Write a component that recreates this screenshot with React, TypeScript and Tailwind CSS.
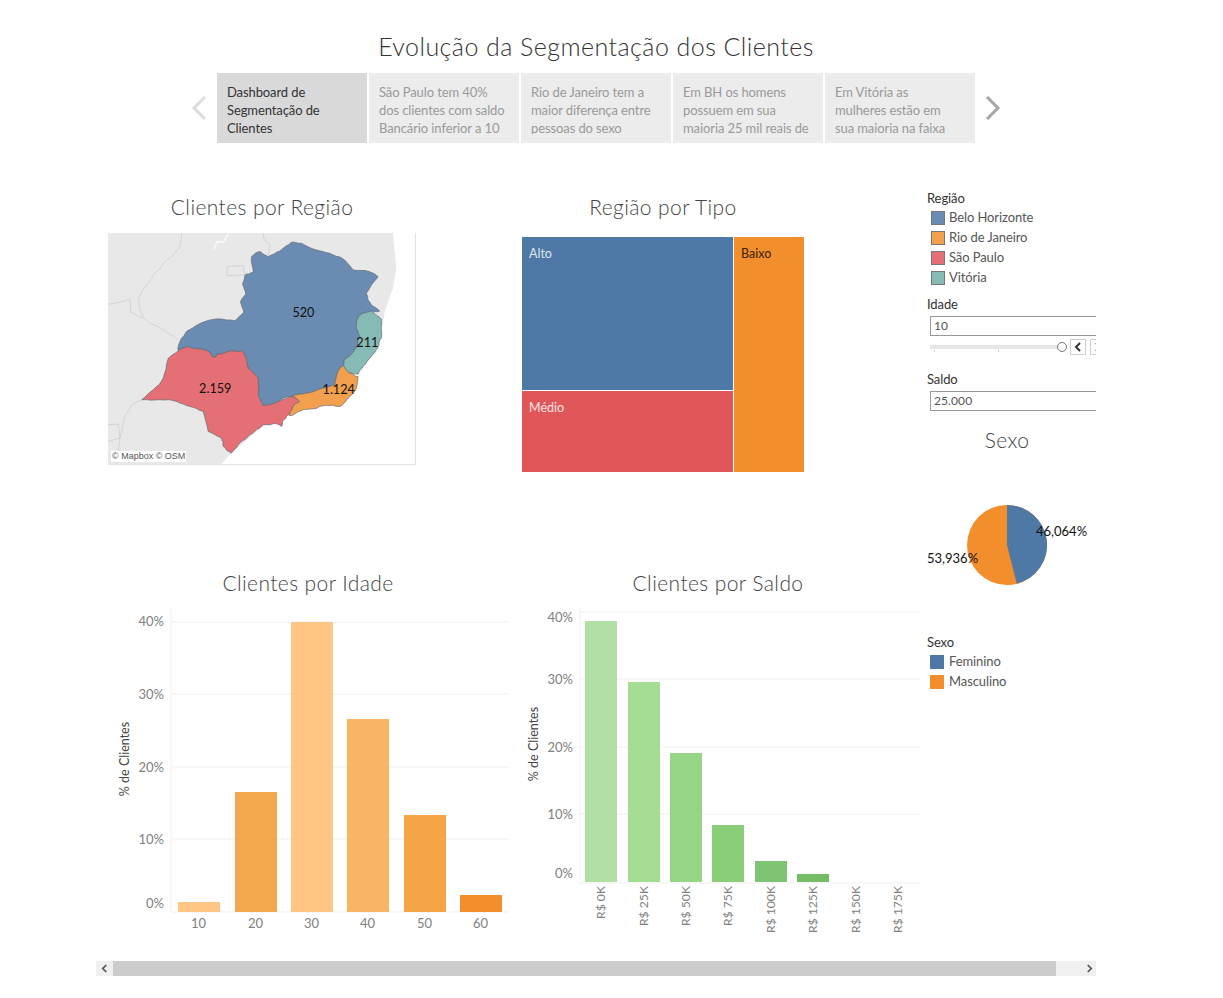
const font = "font-['Lato','Noto_Sans',sans-serif]";

const stories = [
  ["Dashboard de", "Segmentação de", "Clientes"],
  ["São Paulo tem 40%", "dos clientes com saldo", "Bancário inferior a 10"],
  ["Rio de Janeiro tem a", "maior diferença entre", "pessoas do sexo"],
  ["Em BH os homens", "possuem em sua", "maioria 25 mil reais de"],
  ["Em Vitória as", "mulheres estão em", "sua maioria na faixa"],
];

const regionLegend = [
  { label: "Belo Horizonte", color: "bg-[#6a8cb3]" },
  { label: "Rio de Janeiro", color: "bg-[#f2a04e]" },
  { label: "São Paulo", color: "bg-[#e46f75]" },
  { label: "Vitória", color: "bg-[#86bab4]" },
];

const ageBars = [
  { label: "10", x: 178, top: 902, color: "#fec584" },
  { label: "20", x: 235, top: 792, color: "#f4a84d" },
  { label: "30", x: 291, top: 622, color: "#fec584" },
  { label: "40", x: 347, top: 719, color: "#f8b566" },
  { label: "50", x: 404, top: 815, color: "#f5a546" },
  { label: "60", x: 460, top: 895, color: "#f28e2b" },
];

const saldoBars = [
  { label: "R$ 0K", x: 585, top: 621, color: "#b2dfa6" },
  { label: "R$ 25K", x: 628, top: 682, color: "#a4dc92" },
  { label: "R$ 50K", x: 670, top: 753, color: "#95d585" },
  { label: "R$ 75K", x: 712, top: 825, color: "#8acf78" },
  { label: "R$ 100K", x: 755, top: 861, color: "#7fc472" },
  { label: "R$ 125K", x: 797, top: 874, color: "#74bd66" },
  { label: "R$ 150K", x: 840, top: 882, color: "#74bd66" },
  { label: "R$ 175K", x: 882, top: 882, color: "#74bd66" },
];

// map borders are hand traced; this adds some wobble, same on both sides of a shared edge
const roughen = (points: string, passes = 2) => {
  let pts = points.split(" ").map((p) => p.split(",").map(Number));
  for (let pass = 0; pass < passes; pass++) {
    const next: number[][] = [];
    pts.forEach((p, i) => {
      const q = pts[(i + 1) % pts.length];
      const mx = (p[0] + q[0]) / 2;
      const my = (p[1] + q[1]) / 2;
      const a = Math.sin(mx * 12.9898 + my * 78.233) * 43758.5453;
      const b = Math.sin(mx * 39.346 + my * 11.135) * 24634.6345;
      const size = pass === 0 ? 6 : 3;
      next.push(p, [mx + (a - Math.floor(a) - 0.5) * size, my + (b - Math.floor(b) - 0.5) * size]);
    });
    pts = next;
  }
  return pts.map((p) => `${p[0].toFixed(1)},${p[1].toFixed(1)}`).join(" ");
};

const Title = ({ children, className }: { children: string; className: string }) => (
  <h2 className={`h-[28px] text-center text-[21px] leading-[28px] font-light tracking-[0.4px] text-[#444] ${className}`}>
    {children}
  </h2>
);

const FieldLabel = ({ children, className = "" }: { children: string; className?: string }) => (
  <div className={`h-[14px] text-[13px] leading-[14px] tracking-[-0.1px] text-[#333] ${className}`}>{children}</div>
);

const RegionMap = () => (
  <div className="relative h-[232px] w-[308px] border-r border-b border-[#e3e3e3]">
    <svg viewBox="24 24 922 694" className="h-[231px] w-[307px]">
      <polygon points="24,24 880,24 890,130 880,190 855,260 850,300 395,685 365,718 24,718" fill="#e8e8e8" />
      <g fill="none" stroke="#c8c8c8" strokeWidth="2">
        <polyline points="245,24 243,50 238,68 215,95 195,110 180,130 160,150 148,170 125,200 115,225 120,255 130,280 150,296 175,305 205,325 235,345" />
        <polyline points="24,238 60,232 90,222 92,260 125,280" />
        <polyline points="490,24 492,42 510,60 505,95" />
        <polyline points="382,124 430,122 434,150 382,152 382,124" />
        <polyline points="125,525 95,540 75,575 60,640 50,718" />
        <polyline points="24,600 55,598 60,640 24,650" />
      </g>
      <polyline points="342,72 352,50 372,50 385,28" fill="none" stroke="#f6f6f6" strokeWidth="6" />
      <g stroke="#5f6670" strokeWidth="2" strokeLinejoin="round">
        <polygon
          fill="#6a8cb3"
          points={roughen("235,378 240,350 262,318 300,296 350,282 405,288 432,262 422,232 438,208 428,178 436,150 460,142 455,95 482,80 505,95 540,78 575,52 605,55 640,72 690,85 725,98 760,135 808,140 835,155 815,180 800,205 815,240 840,258 815,260 790,265 772,285 770,310 780,335 772,365 755,388 732,405 732,422 715,440 705,480 670,490 620,505 575,515 545,525 510,540 490,543 475,510 475,460 445,430 428,378 390,378 350,388 340,398 330,382 290,372 262,365")}
        />
        <polygon
          fill="#e46f75"
          points={roughen("262,365 290,372 330,382 340,398 350,388 390,378 428,378 445,430 475,460 475,510 490,543 510,540 575,515 600,530 580,545 565,570 548,590 545,605 520,597 490,600 450,630 420,655 395,685 370,665 365,640 325,620 310,560 270,545 230,530 180,525 125,525 160,495 190,460 205,400 235,378")}
        />
        <polygon
          fill="#f2a04e"
          points={roughen("575,515 620,505 670,490 705,480 715,440 732,422 750,445 775,455 770,490 745,520 722,545 690,542 660,545 640,552 610,555 590,565 567,572 580,545 600,530")}
        />
        <polygon
          fill="#86bab4"
          points={roughen("790,265 815,258 845,282 845,340 835,368 815,395 790,425 775,448 750,445 732,422 732,405 755,388 772,365 780,335 770,310 772,285")}
        />
      </g>
      <g fill="#111" fontSize="38" textAnchor="middle">
        <text x="611" y="276">520</text>
        <text x="803" y="368">211</text>
        <text x="717" y="509">1.124</text>
        <text x="346" y="504">2.159</text>
      </g>
    </svg>
    <span className="absolute bottom-[2px] left-[3px] bg-white px-[1px] font-['Liberation_Sans',sans-serif] text-[9px] leading-[11px] text-[#555]">
      © Mapbox © OSM
    </span>
  </div>
);

const Treemap = () => (
  <div className="flex h-[235px] w-[282px] gap-[1px] text-[12.5px] leading-[14px]">
    <div className="flex w-[211px] flex-col gap-[1px]">
      <div className="h-[153px] bg-[#4e79a7] px-[7px] py-[10px] text-[#dfe7f0]">Alto</div>
      <div className="flex-1 bg-[#e15759] px-[7px] py-[10px] text-[#fbe3e3]">Médio</div>
    </div>
    <div className="flex-1 bg-[#f28e2b] px-[7px] py-[10px] text-[#3a2208]">Baixo</div>
  </div>
);

const AgeChart = () => (
  <svg viewBox="96 598 424 340" className="h-[340px] w-[424px]">
    <line x1="171" y1="608" x2="171" y2="912" stroke="#f0f0f0" />
    {[622, 694, 767, 839, 912].map((y) => (
      <line key={y} x1="171" y1={y} x2="509" y2={y} stroke="#efefef" />
    ))}
    {ageBars.map((b) => (
      <g key={b.label}>
        <rect x={b.x} y={b.top} width="42" height={912 - b.top} fill={b.color} />
        <text x={b.x + 20.5} y="928" textAnchor="middle" fontSize="13" fill="#808080">{b.label}</text>
      </g>
    ))}
    <g fontSize="13" fill="#808080" textAnchor="end">
      <text x="164" y="626">40%</text>
      <text x="164" y="699">30%</text>
      <text x="164" y="772">20%</text>
      <text x="164" y="844">10%</text>
      <text x="164" y="908">0%</text>
    </g>
    <text transform="translate(129 759) rotate(-90)" textAnchor="middle" fontSize="12.5" fill="#444">% de Clientes</text>
  </svg>
);

const SaldoChart = () => (
  <svg viewBox="520 598 400 340" className="h-[340px] w-[400px]">
    <line x1="580" y1="608" x2="580" y2="883" stroke="#f0f0f0" />
    {[612, 679, 747, 814, 883].map((y) => (
      <line key={y} x1="580" y1={y} x2="920" y2={y} stroke="#efefef" />
    ))}
    {saldoBars.map((b) => (
      <g key={b.label}>
        {b.top < 882 && <rect x={b.x} y={b.top} width="32" height={882 - b.top} fill={b.color} />}
        <text
          transform={`translate(${b.x + 20} 886) rotate(-90)`}
          textAnchor="end"
          fontSize="12.2"
          fill="#808080"
        >
          {b.label}
        </text>
      </g>
    ))}
    <g fontSize="13" fill="#808080" textAnchor="end">
      <text x="573" y="622">40%</text>
      <text x="573" y="684">30%</text>
      <text x="573" y="752">20%</text>
      <text x="573" y="819">10%</text>
      <text x="573" y="878">0%</text>
    </g>
    <text transform="translate(538 744) rotate(-90)" textAnchor="middle" fontSize="12.5" fill="#444">% de Clientes</text>
  </svg>
);

const SexPie = () => (
  <svg viewBox="927 455 169 145" className="h-[145px] w-[169px]">
    <circle cx="1007" cy="545" r="40" fill="#f28e2b" />
    <path d="M1007 545 L1007 505 A40 40 0 0 1 1016.8 583.8 Z" fill="#4e79a7" />
    <g fontSize="13" fill="#111">
      <text x="1036" y="536">46,064%</text>
      <text x="927" y="563">53,936%</text>
    </g>
  </svg>
);

const App = () => {
  return (
    <div className={`ml-[96px] w-[1000px] pt-[30px] ${font}`}>
      <h1 className="h-[32px] text-center text-[25px] leading-[32px] font-light tracking-[0.45px] text-[#333]">
        Evolução da Segmentação dos Clientes
      </h1>

      <div className="mt-[11px] ml-[95px] flex h-[70px] items-center">
        <svg viewBox="0 0 16 24" className="h-[24px] w-[16px] text-[#dcdcdc]">
          <path d="M14 1 L3 12 L14 23" fill="none" stroke="currentColor" strokeWidth="3" />
        </svg>
        <div className="ml-[10px] flex gap-[2px]">
          {stories.map((lines, i) => (
            <div key={lines[0]} className={`h-[70px] w-[150px] px-[10px] pt-[10px] ${i === 0 ? "bg-[#d9d9d9] text-[#333]" : "bg-[#ececec] text-[#999]"}`}>
              <div className="h-[51px] overflow-hidden text-[13px] leading-[18px] tracking-[-0.1px] whitespace-nowrap">
                {lines.map((line) => (
                  <div key={line}>{line}</div>
                ))}
              </div>
            </div>
          ))}
        </div>
        <svg viewBox="0 0 16 24" className="ml-[10px] h-[24px] w-[16px] text-[#a6a6a6]">
          <path d="M2 1 L13 12 L2 23" fill="none" stroke="currentColor" strokeWidth="3" />
        </svg>
      </div>

      <div className="mt-[48px] flex h-[744px]">
        <div className="w-[831px]">
          <div className="flex h-[378px] pt-[2px]">
            <div className="ml-[12px] w-[308px]">
              <Title className="mb-[12px]">Clientes por Região</Title>
              <RegionMap />
            </div>
            <div className="ml-[106px] w-[282px]">
              <Title className="mb-[16px]">Região por Tipo</Title>
              <Treemap />
            </div>
          </div>
          <div className="flex">
            <div className="w-[424px]">
              <Title className="mb-[1px]">Clientes por Idade</Title>
              <AgeChart />
            </div>
            <div className="w-[400px]">
              <Title className="mb-[1px] w-[396px]">Clientes por Saldo</Title>
              <SaldoChart />
            </div>
          </div>
        </div>

        <div className="w-[169px] overflow-hidden">
          <FieldLabel>Região</FieldLabel>
          <div className="mt-[3px] ml-[4px]">
            {regionLegend.map((r) => (
              <div key={r.label} className="flex h-[20px] items-center gap-[4px] text-[13px] tracking-[-0.1px] text-[#555]">
                <span className={`h-[14px] w-[14px] border border-[#777] ${r.color}`} />
                {r.label}
              </div>
            ))}
          </div>
          <FieldLabel className="mt-[9px]">Idade</FieldLabel>
          <div className="mt-[5px] ml-[3px] h-[20px] w-[200px] border border-[#999] px-[3px] text-[12px] leading-[18px] tracking-[0.1px] text-[#555]">10</div>
          <div className="mt-[3px] ml-[3px] flex h-[16px] w-[200px] items-center">
            <div className="relative h-[4px] w-[132px] bg-[#e6e6e6]">
              <span className="absolute top-[-3px] right-[-5px] h-[10px] w-[10px] rounded-full border border-[#777] bg-white" />
              <span className="absolute top-[5px] left-[4px] h-[2px] w-[1px] bg-[#ccc]" />
              <span className="absolute top-[5px] left-[68px] h-[2px] w-[1px] bg-[#ccc]" />
            </div>
            <div className="ml-[8px] flex h-[16px] w-[16px] items-center justify-center border border-[#ccc] text-[#333]">
              <svg viewBox="0 0 8 10" className="h-[10px] w-[8px]">
                <path d="M6 1 L2 5 L6 9" fill="none" stroke="currentColor" strokeWidth="2" />
              </svg>
            </div>
            <div className="ml-[4px] flex h-[16px] w-[16px] items-center justify-center border border-[#ccc] text-[#333]">
              <svg viewBox="0 0 8 10" className="h-[10px] w-[8px]">
                <path d="M2 1 L6 5 L2 9" fill="none" stroke="currentColor" strokeWidth="2" />
              </svg>
            </div>
          </div>
          <FieldLabel className="mt-[17px]">Saldo</FieldLabel>
          <div className="mt-[5px] ml-[3px] h-[20px] w-[200px] border border-[#999] px-[3px] text-[12px] leading-[18px] tracking-[0.1px] text-[#555]">25.000</div>
          <Title className="mt-[15px] mb-[1px] w-[160px]">Sexo</Title>
          <SexPie />
          <FieldLabel className="mt-[35px]">Sexo</FieldLabel>
          <div className="mt-[3px] ml-[3px]">
            <div className="flex h-[20px] items-center gap-[5px] text-[13px] tracking-[-0.1px] text-[#555]">
              <span className="h-[14px] w-[14px] bg-[#4e79a7]" />
              Feminino
            </div>
            <div className="flex h-[20px] items-center gap-[5px] text-[13px] tracking-[-0.1px] text-[#555]">
              <span className="h-[14px] w-[14px] bg-[#f28e2b]" />
              Masculino
            </div>
          </div>
        </div>
      </div>

      <div className="mt-[26px] flex h-[15px] items-center bg-[#f0f0f0] text-[#555]">
        <div className="flex w-[17px] justify-center">
          <svg viewBox="0 0 8 10" className="h-[9px] w-[7px]">
            <path d="M6 1 L2 5 L6 9" fill="none" stroke="currentColor" strokeWidth="2" />
          </svg>
        </div>
        <div className="h-[15px] w-[943px] bg-[#cccccc]" />
        <div className="flex flex-1 justify-end pr-[3px]">
          <svg viewBox="0 0 8 10" className="h-[9px] w-[7px]">
            <path d="M2 1 L6 5 L2 9" fill="none" stroke="currentColor" strokeWidth="2" />
          </svg>
        </div>
      </div>
    </div>
  );
};

export default App;
